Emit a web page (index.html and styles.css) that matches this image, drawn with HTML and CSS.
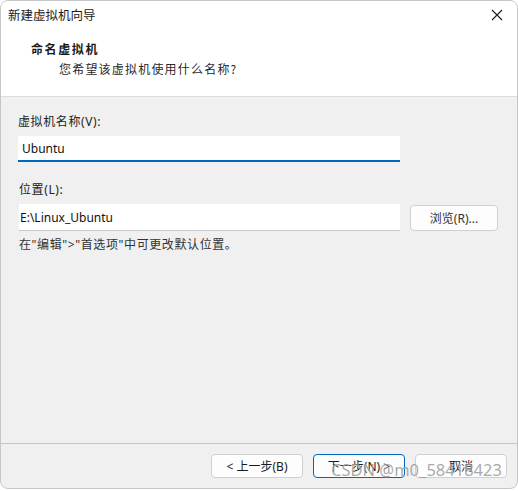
FILE: index.html
```html
<!DOCTYPE html>
<html lang="zh-CN">
<head>
<meta charset="utf-8">
<title>新建虚拟机向导</title>
<link rel="stylesheet" href="styles.css">
</head>
<body>
<div class="window">
  <div class="top">
    <div class="titlebar">
      <span class="title">新建虚拟机向导</span>
      <span class="close">
        <svg width="12" height="12" viewBox="0 0 12 12"><path d="M1 1 L11 11 M11 1 L1 11" stroke="#1a1a1a" stroke-width="1.1" fill="none"/></svg>
      </span>
    </div>
    <div class="header">
      <div class="h1">命名虚拟机</div>
      <div class="sub">您希望该虚拟机使用什么名称?</div>
    </div>
  </div>
  <div class="main">
    <div class="label">虚拟机名称(V):</div>
    <div class="input focused">Ubuntu</div>
    <div class="label label2">位置(L):</div>
    <div class="row">
      <div class="input path">E:\Linux_Ubuntu</div>
      <div class="btn browse">浏览(R)...</div>
    </div>
    <div class="hint">在"编辑"&gt;"首选项"中可更改默认位置。</div>
  </div>
  <div class="footer">
    <div class="btn">&lt; 上一步(B)</div>
    <div class="btn primary">下一步(N) &gt;</div>
    <div class="btn">取消</div>
  </div>
  <div class="watermark">CSDN @m0_58418423</div>
</div>
</body>
</html>
```
FILE: styles.css
```css
html, body {
  margin: 0;
  padding: 0;
  background: #ffffff;
}
body {
  font-family: "Noto Sans", "Noto Sans CJK SC", sans-serif;
  font-size: 12px;
  color: #1a1a1a;
}
.window {
  position: relative;
  width: 516px;
  height: 487px;
  border: 1px solid #c6c6c6;
  border-radius: 8px;
  overflow: hidden;
  background: #f0f0f0;
  display: flex;
  flex-direction: column;
}
.top {
  background: #ffffff;
  height: 95px;
  border-bottom: 1px solid #dcdcdc;
}
.titlebar {
  height: 27px;
  display: flex;
  align-items: center;
  justify-content: space-between;
  padding: 0 14px 0 7px;
}
.title {
  font-family: "Noto Sans CJK SC", sans-serif;
  font-size: 12.5px;
  line-height: 16px;
  color: #1a1a1a;
}
.close {
  display: flex;
  width: 12px;
  height: 12px;
}
.header {
  padding-top: 13px;
}
.h1 {
  padding-left: 30px;
  font-family: "Noto Sans CJK SC", sans-serif;
  font-weight: 700;
  font-size: 12px;
  letter-spacing: 1.6px;
  line-height: 16px;
}
.sub {
  padding-left: 58px;
  margin-top: 4px;
  font-family: "Noto Sans CJK SC", sans-serif;
  font-size: 12px;
  letter-spacing: 1.2px;
  line-height: 16px;
  color: #2a2a2a;
}
.main {
  height: 347px;
  border-bottom: 1px solid #c4c4c4;
  padding: 0 0 0 17px;
  box-sizing: border-box;
}
.label {
  margin-top: 17px;
  line-height: 16px;
  font-family: "Noto Sans", "Noto Sans CJK SC", sans-serif;
  font-size: 12px;
  letter-spacing: 0.6px;
  color: #222;
}
.label2 {
  margin-top: 20px;
  padding-left: 1px;
}
.input {
  margin-top: 6px;
  width: 382px;
  height: 26px;
  box-sizing: border-box;
  background: #ffffff;
  border-bottom: 1px solid #c8c8c8;
  padding: 0 4px;
  display: flex;
  align-items: center;
  font-family: "Noto Sans", sans-serif;
  font-size: 12px;
  color: #111;
}
.input.focused {
  border-bottom: 2px solid #0067c0;
  padding-top: 1px;
}
.row {
  margin-top: 6px;
  display: flex;
  align-items: flex-start;
  gap: 10px;
  padding-left: 1px;
}
.row .input {
  margin-top: 0;
  width: 381px;
  height: 27px;
  padding-left: 1px;
}
.btn {
  box-sizing: border-box;
  height: 24px;
  width: 92px;
  background: #fdfdfd;
  border: 1px solid #d0d0d0;
  border-radius: 4px;
  display: flex;
  align-items: center;
  justify-content: center;
  white-space: nowrap;
  font-family: "Noto Sans", "Noto Sans CJK SC", sans-serif;
  font-size: 12px;
  color: #1a1a1a;
}
.browse {
  margin-top: 1px;
  width: 88px;
  height: 26px;
  color: #333;
}
.hint {
  margin-top: 6px;
  padding-left: 1px;
  line-height: 16px;
  font-family: "Noto Sans", "Noto Sans CJK SC", sans-serif;
  font-size: 12px;
  letter-spacing: 0.6px;
  color: #333;
}
.footer {
  display: flex;
  justify-content: flex-end;
  gap: 10px;
  padding: 10px 10px 0 0;
}
.btn.primary {
  border: 1px solid #0067c0;
}
.watermark {
  position: absolute;
  left: 330px;
  top: 458px;
  white-space: nowrap;
  font-family: "Noto Sans", sans-serif;
  font-size: 16.5px;
  line-height: 22px;
  letter-spacing: 0;
  color: rgba(110, 110, 110, 0.6);
  text-shadow: 0 0 1px rgba(255, 255, 255, 0.8);
  pointer-events: none;
}
```
